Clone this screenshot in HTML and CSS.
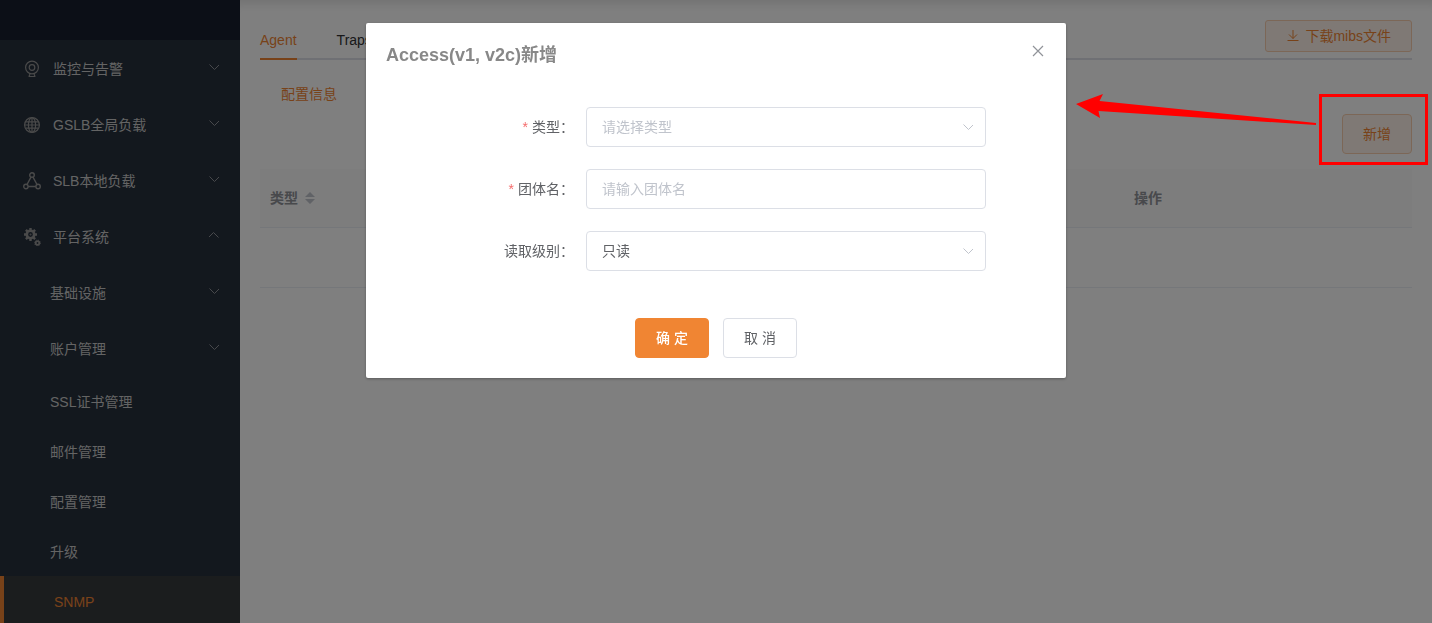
FILE: index.html
```
<!DOCTYPE html>
<html lang="zh-CN">
<head>
  <meta charset="UTF-8">
  <meta name="viewport" content="width=device-width, initial-scale=1.0">
  <title>SNMP</title>
  <link rel="stylesheet" href="styles.css">
</head>
<body>
  <svg class="symbols" aria-hidden="true">
    <symbol id="arrow" viewBox="0 0 12 12"><path d="M1.500 3.500 6.500 8.500 11 4" fill="none" stroke="currentColor"/></symbol>
  </svg>

  <div class="app">
    <aside class="sidebar">
      <div class="logo"></div>
      <nav class="menu">
        <a href="#" class="menu-item">
          <svg class="menu-icon" viewBox="0 0 18 18" fill="none" stroke="currentColor" stroke-width="1.200">
            <circle cx="9" cy="7.500" r="6.400"/><circle cx="9" cy="7.500" r="2.800"/>
            <path d="M7 14 6 16.500M11 14l1 2.500M5.500 16.500h7"/>
          </svg>
          <span>监控与告警</span>
          <svg class="menu-arrow"><use href="#arrow"/></svg>
        </a>
        <a href="#" class="menu-item">
          <svg class="menu-icon" viewBox="0 0 18 18" fill="none" stroke="currentColor" stroke-width="1.200">
            <circle cx="9" cy="9" r="7.400"/><ellipse cx="9" cy="9" rx="3.600" ry="7.400"/>
            <path d="M9 1.500v15M2.500 5.800h13M1.500 9h15M2.500 12.200h13"/>
          </svg>
          <span>GSLB全局负载</span>
          <svg class="menu-arrow"><use href="#arrow"/></svg>
        </a>
        <a href="#" class="menu-item">
          <svg class="menu-icon" viewBox="0 0 18 18" fill="none" stroke="currentColor" stroke-width="1.400">
            <circle cx="9" cy="3" r="2.300"/><circle cx="2.900" cy="14.500" r="2.200"/><circle cx="15.100" cy="14.500" r="2.200"/>
            <path d="M8 5.200 4 12.500M10 5.200l4 7.300M5.200 14.500h7.600"/>
          </svg>
          <span>SLB本地负载</span>
          <svg class="menu-arrow"><use href="#arrow"/></svg>
        </a>
        <a href="#" class="menu-item">
          <svg class="menu-icon" viewBox="0 0 18 18" fill="none" stroke="currentColor">
            <circle cx="7.500" cy="6.500" r="3.700" stroke-width="2.600"/>
            <path d="M7.500 0v2.500M7.500 10.500V13M1 6.500h2.500M11.500 6.500H14M2.900 1.900l1.800 1.800M10.300 9.300l1.800 1.800M2.900 11.100l1.800-1.800M10.300 3.700l1.800-1.800" stroke-width="2.400"/>
            <circle cx="7.500" cy="6.500" r="0.500"/>
            <circle cx="14.500" cy="15" r="1.800" stroke-width="1.800"/>
            <circle cx="14.500" cy="15" r="2.900" stroke-width="0.900" stroke-dasharray="1.140 1.140"/>
          </svg>
          <span>平台系统</span>
          <svg class="menu-arrow open"><use href="#arrow"/></svg>
        </a>
        <a href="#" class="menu-item sub">
          <span>基础设施</span>
          <svg class="menu-arrow"><use href="#arrow"/></svg>
        </a>
        <a href="#" class="menu-item sub">
          <span>账户管理</span>
          <svg class="menu-arrow"><use href="#arrow"/></svg>
        </a>
        <a href="#" class="menu-item leaf">SSL证书管理</a>
        <a href="#" class="menu-item leaf">邮件管理</a>
        <a href="#" class="menu-item leaf">配置管理</a>
        <a href="#" class="menu-item leaf">升级</a>
        <a href="#" class="menu-item leaf active">SNMP</a>
      </nav>
    </aside>

    <main class="main">
      <div class="tabs">
        <a href="#" class="tab active">Agent</a>
        <a href="#" class="tab">Traps</a>
        <button type="button" class="btn btn-plain btn-small">
          <svg class="download" viewBox="0 0 14 14" fill="none" stroke="currentColor"><path d="M7 2v8.500M3 6.500l4 4 4-4M1.500 12.500h11"/></svg>
          下载mibs文件
        </button>
      </div>
      <div class="sub-tabs"><a href="#">配置信息</a></div>
      <div class="toolbar">
        <button type="button" class="btn btn-plain">新增</button>
      </div>
      <table class="table">
        <thead>
          <tr>
            <th>类型 <svg class="sort" viewBox="0 0 10 12"><path d="M0 5 5 0l5 5zM0 7l5 5 5-5z" fill="currentColor"/></svg></th>
            <th></th>
            <th></th>
            <th>操作</th>
          </tr>
        </thead>
        <tbody>
          <tr><td colspan="4"></td></tr>
        </tbody>
      </table>
    </main>
  </div>

  <div class="overlay">
    <div class="dialog" role="dialog" aria-labelledby="dialogTitle">
      <div class="dialog-header">
        <h2 id="dialogTitle">Access(v1, v2c)新增</h2>
        <button type="button" class="close" aria-label="关闭">
          <svg viewBox="0 0 12 12" stroke="currentColor" stroke-width="1.200"><path d="M1 1l10 10M11 1 1 11"/></svg>
        </button>
      </div>
      <form class="form">
        <div class="form-item">
          <label for="type" class="required">类型：</label>
          <div class="select">
            <select id="type" required>
              <option value="" selected>请选择类型</option>
              <option value="v1">v1</option>
              <option value="v2c">v2c</option>
            </select>
            <svg><use href="#arrow"/></svg>
          </div>
        </div>
        <div class="form-item">
          <label for="community" class="required">团体名：</label>
          <input type="text" id="community" placeholder="请输入团体名">
        </div>
        <div class="form-item">
          <label for="level">读取级别：</label>
          <div class="select">
            <select id="level">
              <option selected>只读</option>
            </select>
            <svg><use href="#arrow"/></svg>
          </div>
        </div>
        <div class="form-buttons">
          <button type="button" class="btn btn-primary">确 定</button>
          <button type="button" class="btn">取 消</button>
        </div>
      </form>
    </div>

    <!-- callout from the add button to the dialog -->
    <svg class="callout-arrow" viewBox="0 0 241 32"><path d="M0 10 27 0 23.500 7 240 29v2L22.500 17l1.500 7z" fill="#f00"/></svg>
    <div class="callout-box"></div>
  </div>
</body>
</html>
```

FILE: styles.css
```
* {
  box-sizing: border-box;
}
body {
  margin: 0;
  font-family: "Liberation Sans", "Noto Sans CJK SC", sans-serif;
  font-size: 14px;
  color: #303133;
}
a {
  color: inherit;
  text-decoration: none;
}
button, input, select {
  font: inherit;
}
.symbols {
  display: none;
}
.app {
  display: flex;
  height: 100vh;
  overflow: hidden;
}

/* sidebar */
.sidebar {
  flex: 0 0 240px;
  background: #26303d;
  color: #c8c8c8;
}
.logo {
  height: 40px;
  background: #181f2e;
}
.menu-item {
  display: flex;
  align-items: center;
  height: 56px;
  padding: 2px 20px 0 23px;
  line-height: 18px;
}
.menu-item.sub {
  padding-left: 50px;
}
.menu-item.leaf {
  height: 50px;
  padding-left: 50px;
}
.menu-item.active {
  border-left: 4px solid #f08533;
  background: #373a3d;
  color: #f08533;
}
.menu-icon {
  width: 18px;
  height: 18px;
  margin-right: 12px;
  color: #949494;
}
.menu-arrow {
  width: 12px;
  height: 12px;
  margin: 0 0 4px auto;
  color: #909399;
}
.menu-arrow.open {
  transform: rotate(180deg);
}

/* content */
.main {
  flex: 1;
  padding: 20px;
  box-shadow: inset 0 12px 12px -10px rgba(0, 0, 0, 0.14);
}
.tabs {
  display: flex;
  align-items: flex-start;
  gap: 40px;
  height: 40px;
  border-bottom: 2px solid #dfe0e8;
}
.tab {
  height: 40px;
  line-height: 40px;
}
.tab.active {
  border-bottom: 2px solid #f08533;
  color: #f08533;
}
.sub-tabs {
  margin-top: 14px;
  padding: 0 21px;
  line-height: 40px;
  color: #f08533;
}
.toolbar {
  display: flex;
  justify-content: flex-end;
  margin-bottom: 15px;
}
.btn {
  height: 40px;
  padding: 0 20px 2px;
  border: 1px solid #dcdfe6;
  border-radius: 4px;
  background: #fff;
  color: #606266;
  cursor: pointer;
}
.btn-primary {
  border-color: #f08533;
  background: #f08533;
  color: #fff;
  font-weight: 500;
}
.btn-plain {
  border-color: #f9ceae;
  background: #fef3eb;
  color: #f08533;
}
.btn-small {
  display: flex;
  align-items: center;
  height: 32px;
  margin-left: auto;
  border-radius: 3px;
}
.download {
  width: 14px;
  height: 14px;
  margin-right: 5px;
}
.table {
  width: 100%;
  table-layout: fixed;
  border-collapse: separate;
  border-spacing: 0;
}
.table th, .table td {
  height: 59px;
  padding: 0 10px;
  border-bottom: 1px solid #ebeef5;
  text-align: left;
}
.table th {
  padding-bottom: 2px;
  background: #fafafa;
  color: #909399;
}
.table td {
  height: 60px;
}
.sort {
  width: 10px;
  height: 12px;
  margin-left: 3px;
  vertical-align: -1px;
  color: #c0c4cc;
}

/* dialog */
.overlay {
  position: fixed;
  inset: 0;
  background: rgba(0, 0, 0, 0.5);
}
.dialog {
  width: 700px;
  max-width: 100%;
  margin: 23px auto;
  padding: 20px;
  border-radius: 2px;
  background: #fff;
  box-shadow: 0 1px 3px rgba(0, 0, 0, 0.3);
}
.dialog-header {
  display: flex;
  justify-content: space-between;
  align-items: flex-start;
}
.dialog-header h2 {
  margin: 0;
  font-size: 18px;
  line-height: 24px;
  color: #888;
}
.close {
  display: flex;
  padding: 2px;
  border: 0;
  background: none;
  color: #909399;
  cursor: pointer;
}
.close svg {
  width: 12px;
  height: 12px;
}
.form {
  padding: 40px 60px 0;
}
.form-item {
  display: flex;
  margin-bottom: 22px;
}
.form-item label {
  flex: 0 0 140px;
  padding-right: 12px;
  line-height: 40px;
  text-align: right;
  color: #606266;
}
.form-item label.required::before {
  content: "*";
  margin-right: 4px;
  color: #f56c6c;
}
.form-item > input, .select {
  flex: 1;
  min-width: 0;
}
.select {
  position: relative;
}
input, select {
  width: 100%;
  height: 40px;
  padding: 0 15px;
  border: 1px solid #dcdfe6;
  border-radius: 4px;
  outline: none;
  background: #fff;
  color: #606266;
  appearance: none;
}
input::placeholder, select:invalid {
  color: #c0c4cc;
}
.select svg {
  position: absolute;
  top: 14px;
  right: 12px;
  width: 12px;
  height: 12px;
  color: #c0c4cc;
  pointer-events: none;
}
.form-buttons {
  display: flex;
  justify-content: center;
  gap: 14px;
  margin-top: 47px;
}

/* callout */
.callout-arrow {
  position: absolute;
  top: 94px;
  right: 115px;
  width: 241px;
  height: 32px;
}
.callout-box {
  position: absolute;
  top: 94px;
  right: 4px;
  width: 109px;
  height: 71px;
  border: 3px solid #f00;
}
```
